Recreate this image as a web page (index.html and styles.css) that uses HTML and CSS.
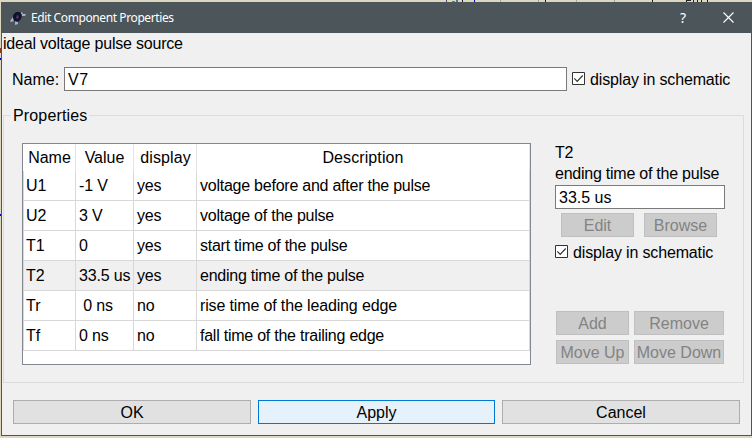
FILE: index.html
```html
<!DOCTYPE html>
<html lang="en">
<head>
<meta charset="utf-8">
<title>Edit Component Properties</title>
<link rel="stylesheet" href="styles.css">
</head>
<body>
<svg class="schematic" width="752" height="438" shape-rendering="crispEdges" aria-hidden="true">
  <path fill="#6a3a78" d="M446 0h1v2h-1z"/>
  <path fill="#777" d="M452 1h3v1h-3z"/>
  <path fill="#3a76b0" d="M456 0h2v2h-2z"/>
  <path fill="#222" d="M462 0h1v2h-1zM652 0h1v2h-1zM686 0h5v1h-5zM686 1h1v1h-1zM693 0h1v2h-1zM697 0h1v2h-1zM701 0h1v2h-1z"/>
  <path fill="#0000c8" d="M474 0h1v2h-1zM545 0h1v2h-1zM707 0h1v2h-1zM0 58h1v2h-1zM0 214h1v2h-1z"/>
  <path fill="#a5a5a8" d="M500 0h1v2h-1zM538 0h1v2h-1zM576 0h1v2h-1zM614 0h1v2h-1z"/>
  <path fill="#8c3c20" d="M0 48h1v5h-1z"/>
</svg>
<div class="window">
  <header class="titlebar">
    <svg class="logo" width="16" height="16" viewBox="0 0 16 16">
      <path fill="#a9adc6" d="M0 11l3-4 2 1-1 3-3 1zM9 4l3-2 1 2 3 0-1 2-4 0zM5 11l3 0 0 3-3 1z"/>
      <path fill="#10132e" d="M3 5l3-3 4 0 2 3-1 4-3 3-4-1-1-3z"/>
      <path fill="#59345e" d="M7 5l2 1-1 3-2-1z"/>
    </svg>
    <span class="title">Edit Component Properties</span>
    <span class="help">?</span>
    <svg class="close" width="11" height="11" viewBox="0 0 11 11"><path d="M.5.5l10 10M10.5.5l-10 10" stroke="#fff" stroke-width="1.1"/></svg>
  </header>
  <main class="content">
    <div class="summary">ideal voltage pulse source</div>
    <div class="name-row">
      <span class="name-label">Name:</span>
      <div class="input name-input">V7</div>
      <div class="check">
        <svg class="box" width="13" height="13" viewBox="0 0 13 13"><path class="frame" d="M.5.5h12v12H.5z"/><path class="tick" d="M2.3 6.3l2.9 3 5.5-5.8"/></svg>
        <span>display in schematic</span>
      </div>
    </div>
    <section class="group">
      <div class="legend">Properties</div>
      <div class="table">
        <div class="row head"><span>Name</span><span>Value</span><span>display</span><span>Description</span></div>
        <div class="row"><span>U1</span><span>-1 V</span><span>yes</span><span>voltage before and after the pulse</span></div>
        <div class="row"><span>U2</span><span>3 V</span><span>yes</span><span>voltage of the pulse</span></div>
        <div class="row"><span>T1</span><span>0</span><span>yes</span><span>start time of the pulse</span></div>
        <div class="row selected"><span>T2</span><span>33.5 us</span><span>yes</span><span>ending time of the pulse</span></div>
        <div class="row"><span>Tr</span><span> 0 ns</span><span>no</span><span class="wide">rise time of the leading edge</span></div>
        <div class="row"><span>Tf</span><span>0 ns</span><span>no</span><span>fall time of the trailing edge</span></div>
      </div>
      <div class="editor">
        <div class="line">T2</div>
        <div class="line">ending time of the pulse</div>
        <div class="input">33.5 us</div>
        <div class="pair"><div class="button disabled">Edit</div><div class="button disabled">Browse</div></div>
        <div class="check">
          <svg class="box" width="13" height="13" viewBox="0 0 13 13"><path class="frame" d="M.5.5h12v12H.5z"/><path class="tick" d="M2.3 6.3l2.9 3 5.5-5.8"/></svg>
          <span>display in schematic</span>
        </div>
        <div class="actions">
          <div class="button disabled">Add</div><div class="button disabled">Remove</div>
          <div class="button disabled">Move Up</div><div class="button disabled">Move Down</div>
        </div>
      </div>
    </section>
    <footer class="footer">
      <div class="button">OK</div><div class="button active">Apply</div><div class="button">Cancel</div>
    </footer>
  </main>
</div>
</body>
</html>
```
FILE: styles.css
```css
* { box-sizing: border-box; }
body {
  margin: 0;
  width: 752px;
  height: 438px;
  padding: 2px 0 0 1px;
  overflow: hidden;
  background: #dcd7bf;
  font: 16px/20px "Liberation Sans", Arial, sans-serif;
  color: #000;
}
.schematic { position: absolute; left: 0; top: 0; }
.window {
  width: 751px;
  height: 434px;
  border: 1px solid #4c555a;
  border-top: 0;
  background: #f0f0f0;
}
.titlebar {
  display: flex;
  align-items: center;
  height: 31px;
  padding: 0 17px 0 8px;
  background: #4c555a;
  color: #fff;
  font: 12px/16px "Noto Sans", "Open Sans", sans-serif;
}
.title { margin-left: 5px; letter-spacing: -0.4px; flex: 1; }
.help { font-size: 14px; margin-right: 37px; }
.summary { height: 34px; padding: 1px 0 0 1px; letter-spacing: -0.2px; }
.name-row { display: flex; align-items: center; height: 24px; padding-left: 10px; }
.name-label { width: 52px; padding-top: 2px; }
.input {
  height: 24px;
  border: 1px solid #7a7a7a;
  background: #fff;
  padding: 2px 3px;
  line-height: 20px;
}
.name-input { width: 503px; margin-right: 5px; letter-spacing: 0.7px; }
.check { display: flex; align-items: center; gap: 5px; white-space: nowrap; letter-spacing: -0.15px; }
.check span { padding-top: 2px; }
.box { flex: none; margin-top: -2px; }
.frame { fill: #fff; stroke: #333; }
.tick { fill: none; stroke: #333; stroke-width: 1.2; }
.group {
  display: flex;
  align-items: flex-start;
  position: relative;
  width: 741px;
  height: 268px;
  margin: 24px 0 0 1px;
  padding: 27px 0 0 18px;
  border: 1px solid #dcdcdc;
}
.legend { position: absolute; left: 7px; top: -10px; padding: 0 2px; background: #f0f0f0; letter-spacing: 0.15px; }
.table {
  width: 509px;
  height: 222px;
  border: 1px solid #828790;
  background: #fff;
}
.row {
  display: grid;
  grid-template-columns: 52px 58px 63px 333px;
  height: 30px;
  line-height: 29px;
  border-left: 1px solid #d8d8d8;
  white-space: pre;
}
.row span { padding-left: 3px; border-right: 1px solid #d8d8d8; border-bottom: 1px solid #d8d8d8; }
.row span:first-child { padding-left: 2px; }
.row span:nth-child(2) { letter-spacing: -0.15px; }
.row span:nth-child(3) { letter-spacing: -0.2px; }
.row span:last-child { letter-spacing: -0.24px; }
.row .wide:last-child { letter-spacing: -0.14px; }
.selected { background: #f0f0f0; }
.head.row { height: 27px; line-height: 27px; text-align: center; border-left-color: #fff; }
.head.row span { border-bottom: 0; border-right-color: #e5e5e5; padding: 0; letter-spacing: 0; }
.head.row span:nth-child(3) { padding-left: 1px; letter-spacing: 0.1px; }
.head.row span:last-child { letter-spacing: 0.1px; }
.editor { width: 170px; margin-left: 24px; }
.line { height: 21px; line-height: 20px; white-space: nowrap; letter-spacing: -0.24px; }
.pair { display: flex; gap: 10px; margin: 4px 0 0 6px; }
.pair .button { width: 73px; }
.button {
  height: 24px;
  border: 1px solid #adadad;
  background: #e1e1e1;
  line-height: 24px;
  text-align: center;
  white-space: nowrap;
}
.button.disabled { border-color: #bfbfbf; background: #ccc; color: #838383; }
.button.active { border-color: #0078d7; background: #e5f1fb; }
.editor .check { margin-top: 5px; height: 20px; }
.actions {
  display: grid;
  grid-template-columns: 73px 90px;
  gap: 5px;
  margin: 49px 0 0 1px;
}
.footer {
  display: grid;
  grid-template-columns: 238px 237px 238px;
  gap: 7px;
  margin: 17px 0 0 11px;
}
```
